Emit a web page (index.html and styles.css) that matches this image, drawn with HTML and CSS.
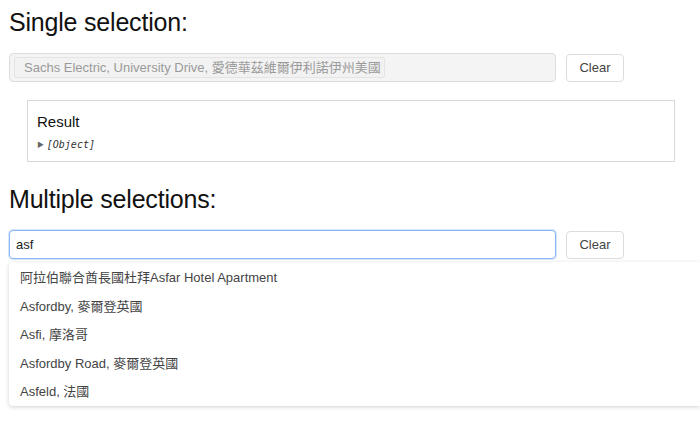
FILE: index.html
```html
<!DOCTYPE html>
<html>
<head>
<meta charset="utf-8">
<link rel="stylesheet" href="styles.css">
</head>
<body>
<h2 class="heading">Single selection:</h2>
<div class="row">
  <div class="field disabled">
    <span class="chip">Sachs Electric, University Drive, 愛德華茲維爾伊利諾伊州美國</span>
  </div>
  <button class="btn">Clear</button>
</div>
<div class="result">
  <div class="result-title">Result</div>
  <div class="result-obj"><span class="tri">▶</span> <span class="obj">[Object]</span></div>
</div>
<h2 class="heading second">Multiple selections:</h2>
<div class="row multi">
  <div class="field focus">asf</div>
  <button class="btn">Clear</button>
  <ul class="menu">
    <li>阿拉伯聯合酋長國杜拜Asfar Hotel Apartment</li>
    <li>Asfordby, 麥爾登英國</li>
    <li>Asfi, 摩洛哥</li>
    <li>Asfordby Road, 麥爾登英國</li>
    <li>Asfeld, 法國</li>
  </ul>
</div>
</body>
</html>
```

FILE: styles.css
```css
html {
  background: #fff;
}
body {
  margin: 0;
  padding: 0 9px;
  font-family: "Liberation Sans", "Noto Sans CJK TC", Arial, sans-serif;
  color: #333;
  width: 700px;
  min-height: 433px;
  box-sizing: border-box;
  position: relative;
}
.heading {
  margin: 0;
  font-weight: normal;
  font-size: 25px;
  line-height: 28px;
  color: #111;
  padding-top: 8px;
  letter-spacing: -0.2px;
}
.row {
  display: flex;
  align-items: center;
  gap: 10px;
  margin-top: 17px;
}
.field {
  box-sizing: border-box;
  width: 547px;
  height: 29px;
  border: 1px solid #dcdcdc;
  border-radius: 4px;
  font-size: 13px;
  display: flex;
  align-items: center;
}
.disabled {
  background: #f4f4f4;
  padding-left: 4px;
}
.chip {
  box-sizing: border-box;
  height: 21px;
  width: 371px;
  border: 1px solid #e4e4e4;
  border-radius: 2px;
  background: #f2f2f2;
  color: #9a9a9a;
  padding-left: 9px;
  line-height: 19px;
  font-size: 13px;
  white-space: nowrap;
  overflow: hidden;
}
.btn {
  box-sizing: border-box;
  width: 58px;
  height: 28px;
  border: 1px solid #dcdcdc;
  border-radius: 4px;
  background: #fff;
  font-family: inherit;
  font-size: 13px;
  color: #444;
  padding: 0;
}
.result {
  box-sizing: border-box;
  margin: 18px 0 0 18px;
  width: 648px;
  height: 62px;
  border: 1px solid #d8d8d8;
  padding: 12px 0 0 9px;
}
.result-title {
  font-size: 15px;
  line-height: 18px;
  color: #111;
}
.result-obj {
  margin-top: 8px;
  font-size: 10px;
  line-height: 12px;
  color: #555;
}
.tri {
  font-size: 7px;
  vertical-align: 1px;
  color: #666;
}
.obj {
  font-family: "DejaVu Sans Mono", "Liberation Mono", monospace;
  font-style: italic;
  font-size: 10px;
  color: #333;
}
.second {
  padding-top: 23px;
}
.multi {
  position: relative;
  margin-top: 17px;
}
.focus {
  border-color: #8ab6f5;
  box-shadow: 0 0 0 1px rgba(138, 182, 245, 0.35);
  padding-left: 6px;
  color: #222;
  background: #fff;
}
.menu {
  position: absolute;
  left: 0;
  top: 32px;
  width: 691px;
  margin: 0;
  padding: 1px 0 0;
  list-style: none;
  background: #fff;
  border-radius: 4px 0 0 4px;
  box-shadow: 0 1px 4px rgba(0, 0, 0, 0.18);
  z-index: 5;
}
.menu li {
  height: 28.6px;
  line-height: 30px;
  padding-left: 11px;
  font-size: 13px;
  color: #444;
  white-space: nowrap;
}
```
